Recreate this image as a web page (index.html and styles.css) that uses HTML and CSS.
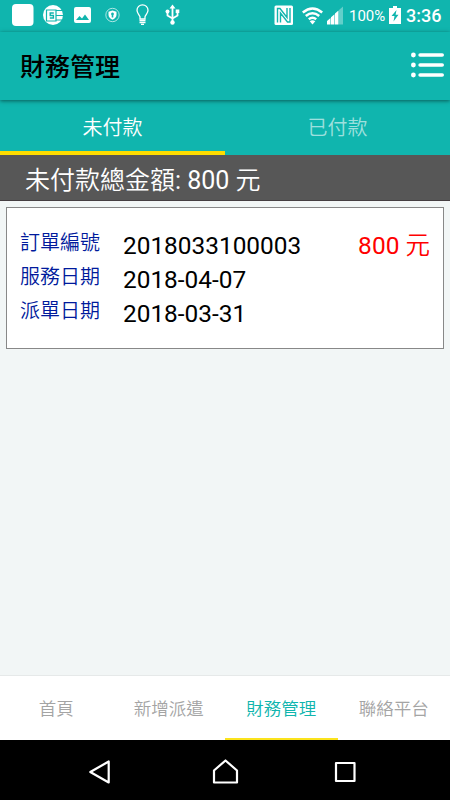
FILE: index.html
```
<!DOCTYPE html>
<html lang="zh-TW">
  <head>
    <meta charset="UTF-8" />
    <meta name="viewport" content="width=device-width, initial-scale=1.0" />
    <title>財務管理</title>
    <link rel="stylesheet" href="styles.css">
  </head>
  <body>
    <!-- 狀態列 -->
    <div class="status-bar">
      <svg class="status-icons" width="190" height="32" viewBox="0 0 190 32" fill="#fff">
        <rect x="12" y="4" width="21.500" height="22" rx="4" />
        <circle cx="53" cy="15" r="10" />
        <g fill="none" stroke="#10b5ae">
          <path d="M46.500 10h9.500v11h-9.500zM56 10.500h7M56 15.500h7M56 20h6" stroke-width="1.200" />
          <path d="M53.800 13h-3.600v2.500h3.200v2.500h-3.600" stroke-width="1.400" />
        </g>
        <path d="M76 7h13a2 2 0 0 1 2 2v12a2 2 0 0 1-2 2H76a2 2 0 0 1-2-2V9a2 2 0 0 1 2-2zM76 20H89L85 14.500l-3 4-2.500-2.500z" fill-rule="evenodd" />
        <circle cx="112.500" cy="15" r="6.700" fill="none" stroke="#fff" stroke-opacity=".65" />
        <path d="M112.500 10.500l4 1.300v3q0 3-4 5-4-2-4-5v-3z" />
        <path d="M112.500 12.500a1.500 1.500 0 0 1 .8 2.700v2.300h-1.600v-2.300a1.500 1.500 0 0 1 .8-2.700z" fill="#10b5ae" />
        <g fill="none" stroke="#fff" stroke-width="1.300">
          <path d="M140 19v-2.300c-1-2.500-3-3.600-3-6.400a5.500 5.500 0 0 1 11 0c0 2.800-2 4-3 6.400V19z" />
          <path d="M139.500 20.500h6M139.500 22.500h6M141 24.300h3" />
        </g>
        <path d="M172.500 7V22M167.500 12V15.500L172.500 18.500 177.500 15.500V11" stroke="#fff" stroke-width="1.800" fill="none" />
        <path d="M172.500 4.500l3 4h-6zM175.700 9.500h3.600v3.600h-3.600z" />
        <circle cx="167.500" cy="11.500" r="2" />
        <circle cx="172.500" cy="22.500" r="2.200" />
      </svg>
      <div class="status-right">
        <svg width="72" height="32" viewBox="272 0 72 32" fill="#fff">
          <rect x="274.500" y="5.500" width="18.500" height="19.500" rx="1.500" />
          <path d="M277.500 22.500V8.500h2.500l7 9V8M290 8v14h-2.500l-7-9v9.500" fill="none" stroke="#10b5ae" stroke-width="1.400" />
          <g fill="none" stroke="#fff" stroke-width="2.500">
            <path d="M302.800 12.500q9.700-8 19.400 0M305.800 16q6.700-5.600 13.400 0M308.800 19.300q3.700-3 7.400 0" />
          </g>
          <path d="M309.700 21.200q2.800-2 5.600 0l-2.800 3.300z" />
          <path d="M327 24.500v-3.500l3.500-3v6.500zM331 24.500v-7.300l3.500-3v10.300zM335 24.500V13.500l3.500-3v14z" />
          <path d="M339 24.500V10l4-3.500v18z" opacity=".35" />
        </svg>
        <span class="battery-level">100%</span>
        <svg class="battery" width="12" height="18" viewBox="0 0 12 18" fill="#fff">
          <path d="M4 0h4v2h4v16H0V2h4zM7.500 4l-5 6h3L4.500 15.500l5-6.700H6.600z" fill-rule="evenodd" />
        </svg>
        <span class="clock">3:36</span>
      </div>
    </div>

    <div class="header">
      <h1>財務管理</h1>
      <svg class="menu-icon" width="36" height="28" viewBox="0 0 36 28" fill="#fff">
        <circle cx="4.400" cy="4" r="2.400" />
        <circle cx="4.400" cy="14" r="2.400" />
        <circle cx="4.400" cy="24" r="2.400" />
        <rect x="9.300" y="2.200" width="25.700" height="3.600" rx="1.800" />
        <rect x="9.300" y="12.200" width="25.700" height="3.600" rx="1.800" />
        <rect x="9.300" y="22.200" width="25.700" height="3.600" rx="1.800" />
      </svg>
    </div>

    <div class="tabs">
      <div class="tab active">未付款</div>
      <div class="tab">已付款</div>
    </div>

    <div class="total-bar">未付款總金額: 800 元</div>

    <!-- 訂單列表 -->
    <div class="order-list">
      <div class="order-card">
        <div class="order-row">
          <span class="order-label">訂單編號</span>
          <span class="order-value">2018033100003</span>
          <span class="order-price">800 元</span>
        </div>
        <div class="order-row">
          <span class="order-label">服務日期</span>
          <span class="order-value">2018-04-07</span>
        </div>
        <div class="order-row">
          <span class="order-label">派單日期</span>
          <span class="order-value">2018-03-31</span>
        </div>
      </div>
    </div>

    <div class="bottom-nav">
      <div class="nav-item">首頁</div>
      <div class="nav-item">新增派遣</div>
      <div class="nav-item active">財務管理</div>
      <div class="nav-item">聯絡平台</div>
    </div>

    <!-- 系統按鍵 -->
    <div class="system-bar">
      <svg width="450" height="60" viewBox="0 0 450 60" fill="none" stroke="#fff" stroke-width="2.200" stroke-linejoin="round">
        <path d="M108.700 21.500V42.500L90.300 32z" />
        <path d="M214 42.500V30.500L225.500 20.500 237 30.500V42.500z" />
        <path d="M336 23H354.500V41H336z" />
      </svg>
    </div>
  </body>
</html>
```
FILE: styles.css
```
* {
  margin: 0;
  padding: 0;
  box-sizing: border-box;
}

body {
  font-family: Roboto, "Noto Sans CJK TC DemiLight", "Noto Sans CJK TC", sans-serif;
  background: #f2f6f6;
  color: #000;
  height: 100vh;
  display: flex;
  flex-direction: column;
  overflow: hidden;
}

svg {
  display: block;
  flex-shrink: 0;
}

.status-bar {
  height: 32px;
  background: #10b5ae;
  display: flex;
  justify-content: space-between;
}

.status-right {
  display: flex;
  align-items: center;
  color: #fff;
  padding-right: 10px;
  line-height: 32px;
}

.battery-level {
  width: 36px;
  margin-left: 5px;
  font-size: 15px;
}

.battery {
  margin: -2px 5px 0 4px;
}

.clock {
  width: 34px;
  font-size: 18px;
  font-weight: 500;
}

.header {
  height: 68px;
  padding: 0 5px 2px 20px;
  background: #10b5ae;
  display: flex;
  justify-content: space-between;
  align-items: center;
  box-shadow: 0 1px 4px rgba(0, 0, 0, 0.5);
  z-index: 1;
}

.header h1 {
  font-family: Roboto, "Noto Sans CJK TC", sans-serif;
  font-size: 25px;
  font-weight: 500;
}

.tabs {
  height: 55px;
  background: #10b5ae;
  display: flex;
}

.tab {
  flex: 1;
  line-height: 56px;
  text-align: center;
  font-size: 20px;
  font-weight: 300;
  color: rgba(255, 255, 255, 0.6);
  border-bottom: 4px solid transparent;
}

.tab.active {
  color: #fff;
  border-bottom-color: #ffdc00;
}

.total-bar {
  height: 46px;
  padding-left: 25px;
  line-height: 51px;
  font-size: 25px;
  color: #fff;
  background: #575757;
  border-bottom: 1px solid #453f42;
}

.order-list {
  flex: 1;
  padding: 6px;
}

.order-card {
  height: 142px;
  padding: 21px 13px 0;
  background: #fff;
  border: 1px solid #888;
}

.order-row {
  height: 34px;
  display: flex;
  line-height: 34px;
}

.order-label {
  width: 103px;
  margin-top: -3px;
  font-size: 20px;
  font-weight: 300;
  color: #001a9c;
}

.order-value {
  font-size: 24.4px;
}

.order-price {
  margin-left: auto;
  font-size: 24.5px;
  color: #f00;
}

.bottom-nav {
  height: 65px;
  background: #fff;
  border-top: 1px solid #e6e9e9;
  display: flex;
}

.nav-item {
  flex: 1;
  line-height: 66px;
  text-align: center;
  font-size: 17.5px;
  font-weight: 300;
  color: #a4a4a4;
  border-bottom: 2px solid transparent;
}

.nav-item.active {
  color: #10b5ae;
  border-bottom-color: #fbe31d;
}

.system-bar {
  height: 60px;
  background: #000;
}
```
